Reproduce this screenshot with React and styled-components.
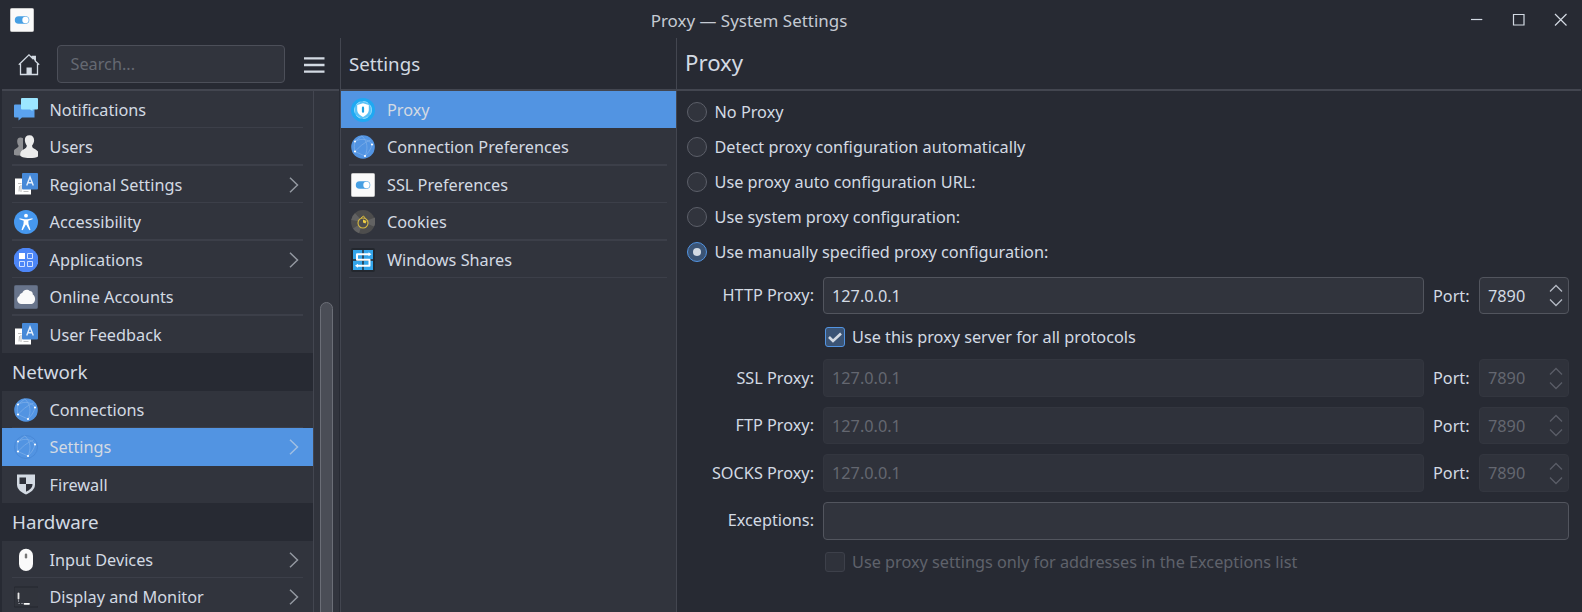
import React from 'react';
import styled, { createGlobalStyle } from 'styled-components';

const c = {
  window: '#272a33',
  view: '#31343d',
  line: '#434650',
  sep: '#3c3f49',
  text: '#d3dae3',
  accent: '#5294e2',
  border: '#52555e',
};

const GlobalStyle = createGlobalStyle`
  * { box-sizing: border-box; }
  html, body { margin: 0; height: 612px; overflow: hidden; background: ${c.window}; }
  body, input, button {
    font-family: 'Noto Sans', sans-serif;
    font-size: 16.25px;
    color: ${c.text};
  }
  svg { display: block; flex: none; }
`;

const Window = styled.div`
  width: 1582px;
  height: 612px;
  display: flex;
  flex-direction: column;
  background: ${c.window};
  overflow: hidden;
`;

const TitleBar = styled.header`
  height: 38px;
  flex: none;
  display: grid;
  grid-template-columns: 1fr auto 1fr;
  align-items: center;
  padding: 2px 14px 0 10px;
  line-height: 24px;
  color: #c5cad3;
`;

const Title = styled.span`
  padding: 1px 80px 0 0;
  font-size: 16.95px;
`;

const WindowButtons = styled.div`
  justify-self: end;
  display: flex;
  gap: 26px;
`;

const Body = styled.div`
  flex: 1;
  min-height: 0;
  display: flex;
  padding-left: 2px;
`;

const Sidebar = styled.aside`
  width: 337px;
  margin-right: 1px;
  display: flex;
  flex-direction: column;
`;

const Middle = styled.section`
  width: 337px;
  border-left: 1px solid ${c.line};
  border-right: 1px solid ${c.line};
  display: flex;
  flex-direction: column;
`;

const Main = styled.main`
  flex: 1;
  margin-right: 1px;
`;

const PaneHeader = styled.div`
  height: 53px;
  flex: none;
  display: flex;
  align-items: center;
  border-bottom: 2px solid ${c.line};
  padding: 1px 8px 0;
  font-size: 18.7px;
  line-height: 30px;
`;

const MainHeader = styled(PaneHeader)`
  padding: 0 8px 2px;
  font-size: 22.2px;
`;

const Toolbar = styled(PaneHeader)`
  padding: 2px 14px 1px 16px;
  justify-content: space-between;

  svg { margin-top: 2px; }
`;

const Search = styled.div`
  width: 228px;
  height: 38px;
  margin: 0 3px 0 0;
  border: 1px solid #4c4f59;
  border-radius: 4px;
  background: ${c.view};
  padding: 0 13px 0;
  font-size: 16.25px;
  line-height: 37px;
  color: #656972;
`;

const SideContent = styled.div`
  flex: 1;
  min-height: 0;
  display: flex;
  background: ${c.view};
`;

const List = styled.div`
  flex: 1;
  min-height: 0;
  overflow: hidden;
  background: ${c.view};
`;

const SideList = styled(List)`
  flex: none;
  width: 311px;
`;

const ScrollTrack = styled.div`
  flex: 1;
  border-left: 1px solid ${c.line};
  padding: 211px 6px 0;
  display: flex;
`;

const ScrollThumb = styled.div`
  width: 13px;
  height: 340px;
  border: 1px solid #6b6e77;
  border-radius: 7px;
  background: #4a4d56;
`;

const Row = styled.div`
  height: ${(p) => (p.$tall ? 38 : 37)}px;
  display: flex;
  align-items: center;
  padding: 0 14px ${(p) => (p.$tall ? 1 : 0)}px ${(p) => p.$inset || 12}px;
  line-height: 24px;
  background-color: ${(p) => (p.$selected ? c.accent : 'transparent')};
  background-image: ${(p) => (p.$sep ? `linear-gradient(${c.sep}, ${c.sep})` : 'none')};
  background-repeat: no-repeat;
  background-size: calc(100% - ${(p) => (p.$inset ? 17 : 20)}px) ${(p) => (p.$tall ? 2 : 1)}px;
  background-position: ${(p) => (p.$inset ? 8 : 10)}px 100%;

  svg + span { margin-left: ${(p) => (p.$inset ? 12 : 11.5)}px; }
`;

const RowLabel = styled.span`
  flex: 1;
  white-space: nowrap;
`;

const Section = styled.div`
  height: 38px;
  padding: 0 10px;
  background: ${c.window};
  font-size: 18.8px;
  line-height: 38px;
`;

const Form = styled.div`
  padding: 11px 12px 0 10px;
  line-height: 24px;
`;

const Option = styled.label`
  height: 20px;
  display: flex;
  align-items: center;
  gap: 7.500px;
  margin-bottom: 15px;
  white-space: nowrap;
`;

const Radio = styled.span`
  width: 20px;
  height: 20px;
  flex: none;
  display: grid;
  place-items: center;
  border: 1px solid ${(p) => (p.$on ? c.accent : '#5c5f69')};
  border-radius: 50%;
  background: ${(p) => (p.$on ? '#3b5475' : c.view)};

  &::after {
    content: '';
    width: 8px;
    height: 8px;
    border-radius: 50%;
    background: ${(p) => (p.$on ? c.text : 'transparent')};
  }
`;

const FieldRow = styled.div`
  height: ${(p) => p.$h}px;
  margin-bottom: ${(p) => p.$gap}px;
  display: flex;
  align-items: center;
`;

const FieldLabel = styled.span`
  width: 127px;
  margin-right: 9px;
  padding-bottom: ${(p) => (p.$raised ? 2 : 1)}px;
  text-align: right;
  white-space: nowrap;
`;

const Field = styled.div`
  flex: ${(p) => (p.$port ? 'none' : 1)};
  width: ${(p) => (p.$port ? '90px' : 'auto')};
  height: 100%;
  display: flex;
  align-items: center;
  justify-content: space-between;
  padding: 0 5px 0 8px;
  border: 1px solid ${(p) => (p.$off ? '#33363f' : c.border)};
  border-radius: 4px;
  background: ${(p) => (p.$off ? '#2f323b' : c.view)};
  color: ${(p) => (p.$off ? '#646770' : c.text)};
`;

const PortLabel = styled.span`
  width: 55px;
  padding-left: 9px;
`;

const CheckRow = styled.label`
  height: 20px;
  margin: 0 0 12px 137.500px;
  display: flex;
  align-items: center;
  gap: 7.500px;
  white-space: nowrap;
  color: ${(p) => (p.$off ? '#5f626b' : c.text)};
`;

const Box = styled.span`
  width: 20px;
  height: 20px;
  flex: none;
  border: 1px solid ${(p) => (p.$on ? c.accent : '#3d404a')};
  border-radius: 3px;
  background: ${(p) => (p.$on ? '#3b5475' : '#2f323b')};
`;

const Icon = ({ children, size = 24 }) => (
  <svg width={size} height={size} viewBox={`0 0 ${size} ${size}`} fill="none">
    {children}
  </svg>
);

const SettingsIcon = () => (
  <Icon>
    <rect x=".5" y=".5" width="23" height="23" rx="1" fill="#fafafa" stroke="#c9c9c9" />
    <rect x="4.800" y="8.200" width="14.500" height="7.600" rx="3.800" fill="#469fe3" />
    <circle cx="15.500" cy="12" r="3.200" fill="#fff" />
  </Icon>
);

const NotificationsIcon = () => (
  <Icon>
    <path d="M1 6.500h19.500v13H8L4.500 22.500v-3H1a1 1 0 0 1-1-1v-11a1 1 0 0 1 1-1z" fill="#5ba2ee" />
    <path d="M8 0h15a1 1 0 0 1 1 1v9.500a1 1 0 0 1-1 1h-4.500v1.500l-2.500-1.500H8a1 1 0 0 1-1-1V1a1 1 0 0 1 1-1z" fill="#9ce6ff" />
  </Icon>
);

const UsersIcon = () => (
  <Icon>
    <path d="M6.500 2.500c-2.500 0-3.500 2-3.300 4.300.1 2 .7 3 1.400 4 0 2.500-5.400 2.500-5.400 7.500 0 1.700 2 2.200 5 2.200H9V3.200c-.7-.5-1.500-.7-2.500-.7z" fill="#8d8e92" />
    <path d="M15.500.3c-3.300 0-4.800 2.200-4.600 5.200.1 2.300 1 3.700 1.900 5 .2 4.500-6.600 2.500-6.600 9.500 0 2 4 3 9.300 3s9.300-1 9.300-3c0-7-6.900-5-6.700-9.500 1-1.300 1.900-2.700 2-5C20.200 2.500 18.700.3 15.500.3z" fill="#ececec" />
  </Icon>
);

const LocaleIcon = () => (
  <Icon>
    <rect x="1" y="5.500" width="16" height="16" fill="#fff" />
    <path d="M4 10.500h3.500M5.500 13l-.5 5.500M7 12v7M9.500 18.500h5" stroke="#b5b5b5" strokeWidth=".9" />
    <rect x="8" y="0" width="16" height="16.500" rx="1" fill="#4689d8" />
    <path d="M12.700 12.500L16 4l3.300 8.500M13.800 9.700h4.400" stroke="#e4effb" strokeWidth="1.400" />
  </Icon>
);

const AccessIcon = () => (
  <Icon>
    <circle cx="12" cy="12" r="12" fill="#4698ef" />
    <circle cx="12" cy="5.700" r="1.900" fill="#fff" />
    <path d="M5.500 8.200l5 1h3l5-1 .1 1.100-4.300 1.500.2 3.200 2 5.700-1.200.5-3-5.500h-.6l-3 5.500-1.200-.5 2-5.700.2-3.200-4.300-1.500z" fill="#fff" />
  </Icon>
);

const AppsIcon = () => (
  <Icon>
    <circle cx="12" cy="12" r="12.400" fill="#4d86f7" />
    <rect x="5" y="5" width="6" height="6" fill="#fff" />
    <path d="M13.500 5.500h5v5h-5zM5.500 13.500h5v5h-5zM13.500 13.500h5v5h-5z" stroke="#cfe0ff" />
  </Icon>
);

const CloudIcon = () => (
  <Icon>
    <rect x=".5" y=".5" width="23" height="23" rx="1" fill="#68748b" stroke="#5b667b" />
    <path d="M7.300 19a4.300 4.300 0 0 1-2-8C6 8.500 7 8.200 8.200 8c1-2.500 2.600-3.300 4.300-3.300 1.500 0 2.500.5 3.300 1.300 2 0 3 1.500 3 3.500 1.500 1 2.300 2.700 2.300 4.500 0 3-2 5-4.400 5z" fill="#fafafa" />
  </Icon>
);

const GlobeIcon = ({ faded }) => (
  <Icon>
    <circle cx="12" cy="12" r="11.800" fill="#5294e2" />
    {faded && <circle cx="12" cy="12" r="11.500" stroke="#4787d4" strokeWidth=".8" />}
    <path
      d="M4 6.500C9 3.500 15 3.500 19.500 7.500L21 9.500M4 6.500C3 10 3 13 4 16.500M4 6.500l7-5.700M4 16.500C8 12 13 7.500 19.500 5M4 16.500l10 4.500M14 21c3-3 6-6.500 7-11.500M14 21C17 14 17 7 11 1"
      stroke="#80b0ea"
      strokeWidth=".7"
    />
    <g fill="#fff">
      <circle cx="4" cy="6.500" r="1" />
      <circle cx="21" cy="9.500" r="1.100" />
      <circle cx="4" cy="16.500" r="1.100" />
      <circle cx="14" cy="21" r="1.100" />
    </g>
  </Icon>
);

const FirewallIcon = () => (
  <Icon>
    <path d="M3 1.500h18v10c0 5-4.500 8-9 10-4.500-2-9-5-9-10z" fill="#d3dae3" />
    <path d="M5.500 4.500H12v6.500H5.500zM12 11h6.500c0 4-3 6-6.500 7.800z" fill="#2f323b" />
  </Icon>
);

const MouseIcon = () => (
  <Icon>
    <rect x="5" y=".7" width="14" height="22.300" rx="7" fill="#fafafa" />
    <rect x="10.800" y="5.500" width="2.400" height="5" rx="1.200" fill="#777" />
  </Icon>
);

const DisplayIcon = () => (
  <Icon>
    <rect x="0" y="2" width="24.500" height="20" rx="1" fill="#31343c" stroke="#24272e" />
    <path d="M4.500 12v6.500h7" stroke="#80828a" strokeDasharray="2 1" />
    <path d="M4.500 8.500v5" stroke="#e8e8e8" strokeWidth="1.800" strokeLinecap="round" />
    <path d="M10.500 18.800h4.500" stroke="#fff" strokeWidth="1.800" strokeLinecap="round" />
  </Icon>
);

const ProxyIcon = () => (
  <Icon>
    <circle cx="12" cy="12" r="12" fill="#1fa9f2" />
    <circle cx="12" cy="12" r="9" fill="#57c1f7" />
    <circle cx="12" cy="12" r="8.500" stroke="#8ed9fb" strokeDasharray="5 3" />
    <path d="M12 5.300l5.800 1.800v4.500c0 3.700-2.500 5.800-5.800 7.400-3.300-1.600-5.800-3.700-5.800-7.400V7.100z" fill="#fff" />
    <path d="M12 9.700v4" stroke="#1fa2e0" strokeWidth="2.200" strokeLinecap="round" />
  </Icon>
);

const CookieIcon = () => (
  <Icon>
    <circle cx="12" cy="12" r="11.900" fill="#4d4d4d" />
    <path d="M12 12L4 3.300A12 12 0 0 0 .2 10zM12 12l12-4.500a12 12 0 0 1-1 9zM12 12L8 23.200a12 12 0 0 1-6-4.800z" fill="#626262" />
    <circle cx="12" cy="13" r="5" fill="#4d4d4d" stroke="#d9bb40" strokeWidth="1.100" />
    <path d="M10 8l2.500-2L14.500 8.500" stroke="#d9bb40" />
    <path d="M12 12.500V9.500l3.500 1.500-1 2.500z" fill="#f0cf45" />
  </Icon>
);

const SharesIcon = () => (
  <Icon>
    <rect x="0" y="0" width="24" height="24" rx="2" fill="#23272e" />
    <path d="M2 2h9.300v9.300H2zM12.700 2H22v9.300h-9.300zM2 12.700h9.300V22H2zM12.700 12.700H22V22h-9.300z" fill="#34a5ea" />
    <path d="M18.500 6.200H6v5.600h12.500v6H6" stroke="#fff" strokeWidth="2" strokeLinejoin="round" />
    <path d="M17.500 4.200l3 2-3 2zM7 15.800l-3 2 3 2z" fill="#fff" />
  </Icon>
);

const Chevron = () => (
  <svg width="10" height="16" viewBox="0 0 10 16" fill="none">
    <path d="M1 .8l7.500 7.200L1 15.200" stroke="#d3dae3" strokeOpacity=".6" strokeWidth="1.500" />
  </svg>
);

const HomeIcon = () => (
  <svg width="22" height="22" viewBox="0 0 22 22" fill="none">
    <path d="M.8 10.800L11 .9l3.300 3.200V2.500h3v4.500l3.900 3.800" stroke={c.text} strokeWidth="1.300" />
    <path d="M2.500 9.500v11h17v-11" stroke={c.text} strokeWidth="1.300" />
    <path d="M14.300 2h3v5l-3-2.800zM8.500 13.500h5.300V21H8.500z" fill={c.text} />
  </svg>
);

const MenuIcon = () => (
  <svg width="21" height="16" viewBox="0 0 21 16" fill="none">
    <path d="M0 1.300h20.500M0 8h20.500M0 14.600h20.500" stroke={c.text} strokeWidth="2.300" />
  </svg>
);

const Check = () => (
  <svg width="18" height="18" viewBox="0 0 18 18" fill="none">
    <path d="M3 9l4 4 8-7.500" stroke={c.text} strokeWidth="2.600" />
  </svg>
);

const SpinArrows = ({ off }) => (
  <svg width="14" height="23" viewBox="0 0 14 23" fill="none">
    <path d="M1 7.500L7 1.500l6 6M1 15.500l6 6 6-6" stroke={off ? '#5a5d67' : '#b4b9c3'} strokeWidth="1.300" />
  </svg>
);

const personalization = [
  { label: 'Notifications', icon: <NotificationsIcon />, sep: true },
  { label: 'Users', icon: <UsersIcon />, sep: true },
  { label: 'Regional Settings', icon: <LocaleIcon />, sep: true, more: true },
  { label: 'Accessibility', icon: <AccessIcon />, sep: true },
  { label: 'Applications', icon: <AppsIcon />, sep: true, more: true },
  { label: 'Online Accounts', icon: <CloudIcon />, sep: true },
  { label: 'User Feedback', icon: <LocaleIcon /> },
];

const network = [
  { label: 'Connections', icon: <GlobeIcon />, sep: true },
  { label: 'Settings', icon: <GlobeIcon faded />, selected: true, more: true },
  { label: 'Firewall', icon: <FirewallIcon /> },
];

const hardware = [
  { label: 'Input Devices', icon: <MouseIcon />, sep: true, more: true },
  { label: 'Display and Monitor', icon: <DisplayIcon />, more: true },
];

const networkSettings = [
  { label: 'Proxy', icon: <ProxyIcon />, selected: true },
  { label: 'Connection Preferences', icon: <GlobeIcon />, sep: true },
  { label: 'SSL Preferences', icon: <SettingsIcon />, sep: true },
  { label: 'Cookies', icon: <CookieIcon />, sep: true },
  { label: 'Windows Shares', icon: <SharesIcon />, sep: true },
];

const Rows = ({ items, inset }) =>
  items.map((item, i) => (
    <Row key={item.label} $tall={i % 2 === 1} $sep={item.sep} $selected={item.selected} $inset={inset}>
      {item.icon}
      <RowLabel>{item.label}</RowLabel>
      {item.more && <Chevron />}
    </Row>
  ));

const options = [
  'No Proxy',
  'Detect proxy configuration automatically',
  'Use proxy auto configuration URL:',
  'Use system proxy configuration:',
  'Use manually specified proxy configuration:',
];

const ProxyField = ({ label, h, gap, off }) => (
  <FieldRow $h={h} $gap={gap}>
    <FieldLabel>{label}</FieldLabel>
    <Field $off={off}>127.0.0.1</Field>
    <PortLabel>Port:</PortLabel>
    <Field $port $off={off}>
      7890
      <SpinArrows off={off} />
    </Field>
  </FieldRow>
);

export default function App() {
  return (
    <Window>
      <GlobalStyle />
      <TitleBar>
        <SettingsIcon />
        <Title>Proxy — System Settings</Title>
        <WindowButtons>
          <Icon size={16}><path d="M3 7.500h11.300" stroke={c.text} strokeWidth="1.200" /></Icon>
          <Icon size={16}><path d="M3.500 2.500h10.500v10.500h-10.500z" stroke={c.text} strokeWidth="1.200" /></Icon>
          <Icon size={16}><path d="M3 2l11.500 11.500M14.500 2l-11.500 11.500" stroke={c.text} strokeWidth="1.200" /></Icon>
        </WindowButtons>
      </TitleBar>
      <Body>
        <Sidebar>
          <Toolbar>
            <HomeIcon />
            <Search>Search...</Search>
            <MenuIcon />
          </Toolbar>
          <SideContent>
            <SideList>
              <Rows items={personalization} />
              <Section>Network</Section>
              <Rows items={network} />
              <Section>Hardware</Section>
              <Rows items={hardware} />
            </SideList>
            <ScrollTrack>
              <ScrollThumb />
            </ScrollTrack>
          </SideContent>
        </Sidebar>
        <Middle>
          <PaneHeader>Settings</PaneHeader>
          <List>
            <Rows items={networkSettings} inset={10} />
          </List>
        </Middle>
        <Main>
          <MainHeader>Proxy</MainHeader>
          <Form>
            {options.map((text, i) => (
              <Option key={text}>
                <Radio $on={i === 4} />
                {text}
              </Option>
            ))}
            <ProxyField label="HTTP Proxy:" h={37} gap={13} />
            <CheckRow>
              <Box $on><Check /></Box>
              Use this proxy server for all protocols
            </CheckRow>
            <ProxyField label="SSL Proxy:" h={38} gap={10} off />
            <ProxyField label="FTP Proxy:" h={37} gap={10} off />
            <ProxyField label="SOCKS Proxy:" h={38} gap={10} off />
            <FieldRow $h={38} $gap={12}>
              <FieldLabel $raised>Exceptions:</FieldLabel>
              <Field />
            </FieldRow>
            <CheckRow $off>
              <Box />
              Use proxy settings only for addresses in the Exceptions list
            </CheckRow>
          </Form>
        </Main>
      </Body>
    </Window>
  );
}
